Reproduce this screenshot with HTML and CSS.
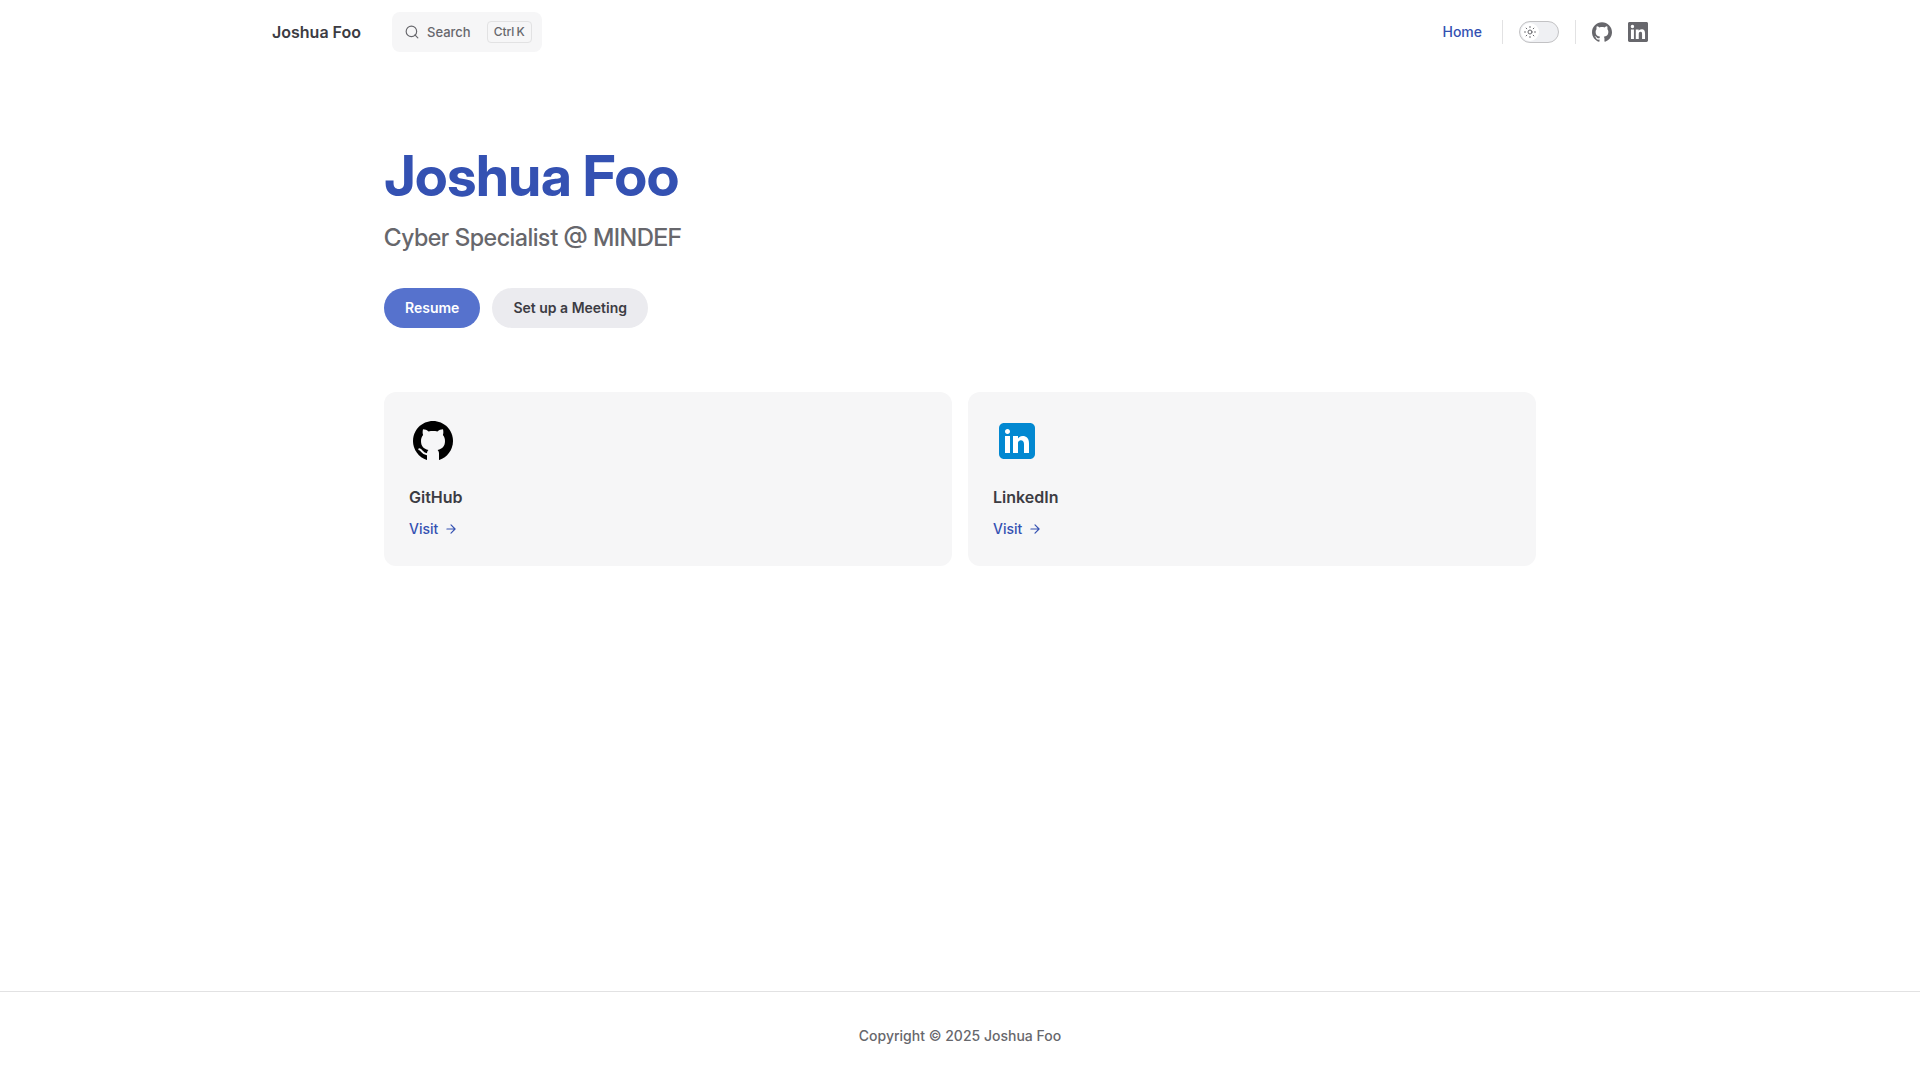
FILE: index.html
```html
<!DOCTYPE html>
<html lang="en">
<head>
<meta charset="utf-8">
<meta name="viewport" content="width=device-width, initial-scale=1">
<title>Joshua Foo</title>
<link rel="stylesheet" href="styles.css">
</head>
<body>
<svg class="sprite" aria-hidden="true">
  <symbol id="github" viewBox="0 0 24 24"><path d="M12 .297c-6.63 0-12 5.373-12 12 0 5.303 3.438 9.8 8.205 11.385.6.113.82-.258.82-.577 0-.285-.01-1.04-.015-2.04-3.338.724-4.042-1.61-4.042-1.61C4.422 18.07 3.633 17.7 3.633 17.7c-1.087-.744.084-.729.084-.729 1.205.084 1.838 1.236 1.838 1.236 1.07 1.835 2.809 1.305 3.495.998.108-.776.417-1.305.76-1.605-2.665-.3-5.466-1.332-5.466-5.93 0-1.31.465-2.38 1.235-3.22-.135-.303-.54-1.523.105-3.176 0 0 1.005-.322 3.3 1.23.96-.267 1.98-.399 3-.405 1.02.006 2.04.138 3 .405 2.28-1.552 3.285-1.23 3.285-1.23.645 1.653.24 2.873.12 3.176.765.84 1.23 1.91 1.23 3.22 0 4.61-2.805 5.625-5.475 5.92.42.36.81 1.096.81 2.22 0 1.606-.015 2.896-.015 3.286 0 .315.21.69.825.57C20.565 22.092 24 17.592 24 12.297c0-6.627-5.373-12-12-12"/></symbol>
  <symbol id="linkedin" viewBox="0 0 24 24"><path d="M20.447 20.452h-3.554v-5.569c0-1.328-.027-3.037-1.852-3.037-1.853 0-2.136 1.445-2.136 2.939v5.667H9.351V9h3.414v1.561h.046c.477-.9 1.637-1.85 3.37-1.85 3.601 0 4.267 2.37 4.267 5.455v6.286zM5.337 7.433a2.062 2.062 0 0 1-2.063-2.065 2.064 2.064 0 1 1 2.063 2.065zm1.782 13.019H3.555V9h3.564v11.452zM22.225 0H1.771C.792 0 0 .774 0 1.729v20.542C0 23.227.792 24 1.771 24h20.451C23.2 24 24 23.227 24 22.271V1.729C24 .774 23.2 0 22.222 0h.003z"/></symbol>
  <symbol id="arrow" viewBox="0 0 24 24"><path d="M5 12h14m-7-7 7 7-7 7" fill="none" stroke="currentColor" stroke-width="2" stroke-linecap="round" stroke-linejoin="round"/></symbol>
</svg>
<header class="nav">
  <div class="nav-inner">
    <a class="site-title" href="#">Joshua Foo</a>
    <button class="search" type="button">
      <svg class="search-icon" viewBox="0 0 24 24" aria-hidden="true"><circle cx="11" cy="11" r="9"/><path d="m22 22-5-5"/></svg>
      <span>Search</span>
      <kbd class="keys"><span>Ctrl</span><span>K</span></kbd>
    </button>
    <nav class="menu"><a class="menu-link" href="#">Home</a></nav>
    <div class="appearance">
      <button class="switch" type="button" role="switch" aria-checked="false" aria-label="Switch to dark theme">
        <span class="knob">
          <svg viewBox="0 0 24 24" aria-hidden="true"><circle cx="12" cy="12" r="4"/><path d="M12 1v2M12 21v2M1 12h2M21 12h2M4.200 4.200l1.400 1.400M18.400 18.400l1.400 1.400M4.200 19.800l1.400-1.400M18.400 5.600l1.400-1.400"/></svg>
        </span>
      </button>
    </div>
    <div class="social">
      <a href="#" aria-label="GitHub"><svg><use href="#github"/></svg></a>
      <a href="#" aria-label="LinkedIn"><svg><use href="#linkedin"/></svg></a>
    </div>
  </div>
</header>
<main class="home">
  <section class="hero">
    <h1 class="name">Joshua Foo</h1>
    <p class="tagline">Cyber Specialist @ MINDEF</p>
    <div class="actions">
      <a class="button brand" href="#">Resume</a>
      <a class="button alt" href="#">Set up a Meeting</a>
    </div>
  </section>
  <section class="features">
    <a class="card" href="#">
      <svg class="card-icon" viewBox="0 0 48 48" aria-hidden="true">
        <path d="M24 4C12.954 4 4 12.954 4 24c0 8.887 5.801 16.411 13.820 19.016h12.360C38.199 40.411 44 32.887 44 24 44 12.954 35.046 4 24 4z"/>
        <path class="cutout" d="M18 43V36.500c0-1.500.5-2.700 1.400-3.600C14.500 32 12 29.200 12 24c0-2.400.7-4.500 2.100-6-.6-1.700-.6-3.600-.1-5.700 2.100 0 3.900.8 5.600 2.200 2.900-.6 5.900-.6 8.800 0 1.700-1.400 3.500-2.200 5.600-2.200.5 2.100.5 4-.1 5.700 1.400 1.500 2.100 3.600 2.100 6 0 5.200-2.500 8-7.400 8.900.9.900 1.400 2.100 1.400 3.600V43z"/>
        <path class="tail" d="M10.300 32.300c3 .4 2.800 5.300 8.200 4.800"/>
      </svg>
      <h2 class="card-title">GitHub</h2>
      <p class="card-link">Visit <svg><use href="#arrow"/></svg></p>
    </a>
    <a class="card" href="#">
      <svg class="card-icon" viewBox="0 0 48 48" aria-hidden="true"><path fill="#0288d1" d="M42 37c0 2.762-2.238 5-5 5H11c-2.761 0-5-2.238-5-5V11c0-2.762 2.239-5 5-5h26c2.762 0 5 2.238 5 5v26z"/><path fill="#fff" d="M12 19h5v17h-5V19zm2.485-2h-.028C12.965 17 12 15.888 12 14.499 12 13.080 12.995 12 14.514 12c1.521 0 2.458 1.080 2.486 2.499C17 15.887 16.035 17 14.485 17zM36 36h-5v-9.099c0-2.198-1.225-3.698-3.192-3.698-1.501 0-2.313 1.012-2.707 1.990-.144.350-.101 1.318-.101 1.807v9h-5V19h5v2.616C25.721 20.500 26.850 19 29.738 19c3.578 0 6.261 2.250 6.261 7.274L36 36z"/></svg>
      <h2 class="card-title">LinkedIn</h2>
      <p class="card-link">Visit <svg><use href="#arrow"/></svg></p>
    </a>
  </section>
</main>
<footer class="footer"><p>Copyright © 2025 Joshua Foo</p></footer>
</body>
</html>
```

FILE: styles.css
```css
:root {
  --text: #3c3c43;
  --muted: #67676c;
  --brand: #3451b2;
  --soft: #f6f6f7;
  --line: #e2e2e3;
}
* { box-sizing: border-box; }
body {
  display: flex;
  flex-direction: column;
  min-height: 100vh;
  margin: 0;
  background: #fff;
  color: var(--text);
  font: 400 16px/24px Inter, "Noto Sans", sans-serif;
  text-rendering: optimizeLegibility;
}
h1, h2, p { margin: 0; }
a { color: inherit; text-decoration: none; }
button, kbd { font-family: inherit; }
svg { display: block; fill: currentColor; }
.sprite { position: absolute; width: 0; height: 0; }

.nav { padding: 0 32px; }
.nav-inner {
  display: flex;
  align-items: center;
  max-width: 1376px;
  height: 64px;
  margin: 0 auto;
}
.site-title { margin-right: 31px; font-weight: 600; }
.search {
  display: flex;
  align-items: center;
  height: 40px;
  padding: 0 10px 0 13px;
  border: 0;
  border-radius: 8px;
  background: var(--soft);
  color: var(--muted);
  font-size: 13px;
  font-weight: 500;
}
.search-icon {
  width: 14px;
  height: 14px;
  margin-right: 8px;
  fill: none;
  stroke: currentColor;
  stroke-width: 2;
  stroke-linecap: round;
}
.keys {
  display: flex;
  gap: 2px;
  margin-left: 16px;
  padding: 0 6px;
  border: 1px solid var(--line);
  border-radius: 4px;
  font-size: 12px;
  line-height: 20px;
}
.menu { margin-left: auto; padding: 0 20px; }
.menu-link {
  display: block;
  color: var(--brand);
  font-size: 14px;
  font-weight: 500;
  line-height: 64px;
}
.appearance, .social { display: flex; align-items: center; height: 24px; }
.appearance {
  padding: 0 16px;
  border: solid var(--line);
  border-width: 0 1px;
}
.switch {
  width: 40px;
  height: 22px;
  padding: 1px;
  border: 1px solid #c2c2c4;
  border-radius: 11px;
  background: #eff0f3;
}
.knob {
  display: grid;
  place-items: center;
  width: 18px;
  height: 18px;
  border-radius: 50%;
  background: #fff;
  color: var(--muted);
}
.knob svg {
  width: 12px;
  height: 12px;
  fill: none;
  stroke: currentColor;
  stroke-width: 2;
  stroke-linecap: round;
}
.social { gap: 16px; padding-left: 16px; color: var(--muted); }
.social svg { width: 20px; height: 20px; }

.home {
  flex: 1;
  width: 100%;
  max-width: 1280px;
  margin: 0 auto;
  padding: 80px 64px 96px;
}
.name, .tagline { font-family: "Inter Display", Inter, sans-serif; }
.name {
  color: var(--brand);
  font-size: 56px;
  font-weight: 700;
  line-height: 64px;
  letter-spacing: -0.4px;
}
.tagline {
  padding-top: 12px;
  color: var(--muted);
  font-size: 24px;
  font-weight: 500;
  line-height: 36px;
}
.actions { display: flex; flex-wrap: wrap; gap: 12px; padding-top: 32px; }
.button {
  padding: 0 21px;
  border-radius: 20px;
  font-size: 14px;
  font-weight: 600;
  line-height: 40px;
}
.brand { background: #5672cd; color: #fff; }
.alt { background: #ebebef; }
.features {
  display: grid;
  grid-template-columns: repeat(auto-fit, minmax(280px, 1fr));
  gap: 16px;
  padding-top: 64px;
}
.card { padding: 25px; border-radius: 12px; background: var(--soft); }
.card-icon { width: 48px; height: 48px; margin-bottom: 20px; color: #000; }
.cutout { fill: var(--soft); }
.tail { fill: none; stroke: var(--soft); stroke-width: 2; stroke-linecap: round; }
.card-title { font-size: 16px; font-weight: 600; line-height: 24px; }
.card-link {
  display: flex;
  align-items: center;
  gap: 6px;
  padding-top: 8px;
  color: var(--brand);
  font-size: 14px;
  font-weight: 500;
}
.card-link svg { width: 14px; height: 14px; }

.footer {
  padding: 32px 24px;
  border-top: 1px solid var(--line);
  color: var(--muted);
  font-size: 14px;
  font-weight: 500;
  text-align: center;
}
```
